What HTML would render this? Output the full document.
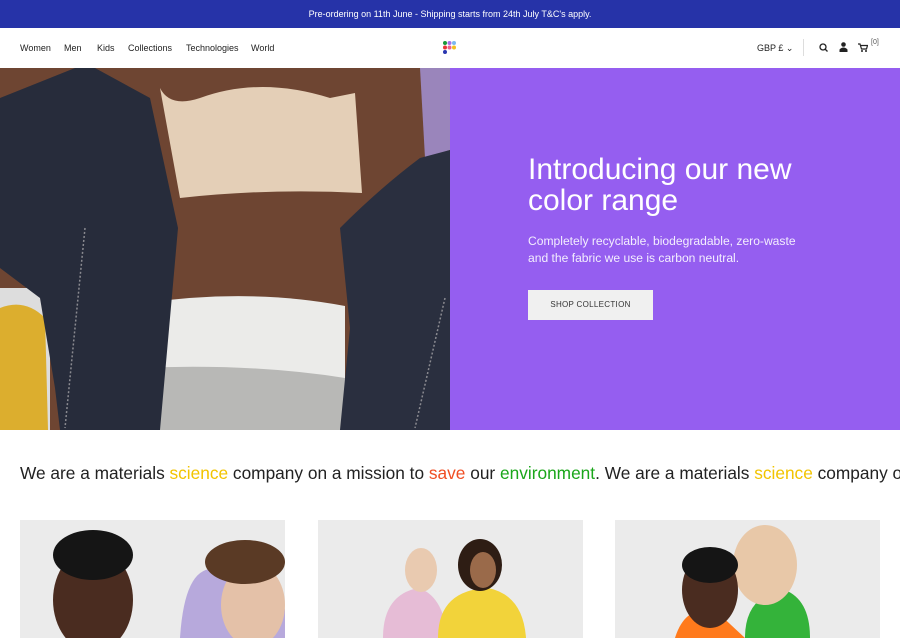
<!DOCTYPE html>
<html><head><meta charset="utf-8"><style>
*{margin:0;padding:0;box-sizing:border-box}
body{width:900px;height:638px;overflow:hidden;background:#fff;font-family:"Liberation Sans",sans-serif;color:#222;position:relative}
.top{height:28px;background:#2633a8;color:#fff;font-size:9px;text-align:center;line-height:28px}
.nav{position:absolute;top:28px;left:0;width:900px;height:40px;font-size:9px}
.nav span{position:absolute;top:15px}
.hero{position:absolute;top:68px;left:0;width:900px;height:362px}
.purple{position:absolute;left:450px;top:0;width:450px;height:362px;background:#955ef0;color:#fff}
h1{position:absolute;left:78px;top:86px;font-weight:400;font-size:30px;line-height:31px;white-space:nowrap}
.sub{position:absolute;left:78px;top:165px;font-size:12.1px;line-height:17px;color:#f3eefe}
.btn{position:absolute;left:78px;top:222px;width:125px;height:30px;background:#f0f0f0;color:#333;font-size:8px;letter-spacing:.3px;text-align:center;line-height:30px}
.mis{position:absolute;left:20px;top:463px;font-size:17.3px;white-space:nowrap;color:#222}
.card{position:absolute;top:520px;width:265px;height:118px;background:#ebebeb;overflow:hidden}
</style></head><body>
<div class="top">Pre-ordering on 11th June - Shipping starts from 24th July T&amp;C's apply.</div>
<div class="nav">
<span style="left:20px">Women</span><span style="left:64px">Men</span><span style="left:97px">Kids</span><span style="left:128px">Collections</span><span style="left:186px">Technologies</span><span style="left:251px">World</span>
<svg style="position:absolute;left:442px;top:13px" width="16" height="16"><circle cx="3" cy="2" r="2" fill="#1a9a3a"/><circle cx="7.5" cy="2" r="2" fill="#a66de8"/><circle cx="12" cy="2" r="2" fill="#7ab8f0"/><circle cx="3" cy="6.5" r="2" fill="#e8363a"/><circle cx="7.5" cy="6.5" r="2" fill="#ef5f8a"/><circle cx="12" cy="6.5" r="2" fill="#f2c01f"/><circle cx="3" cy="11" r="2" fill="#2a36b0"/></svg>
<span style="left:757px">GBP £ &#8964;</span>
<div style="position:absolute;left:803px;top:11px;width:1px;height:17px;background:#ddd"></div>
<svg style="position:absolute;left:819px;top:15px" width="9" height="9"><circle cx="4" cy="4" r="3" fill="none" stroke="#222" stroke-width="1.3"/><path d="M6 6l2.5 2.5" stroke="#222" stroke-width="1.3"/></svg>
<svg style="position:absolute;left:839px;top:14px" width="9" height="10"><circle cx="4.5" cy="2.5" r="2.3" fill="#222"/><path d="M0.5 10v-2.5q4-4 8 0v2.5z" fill="#222"/></svg>
<svg style="position:absolute;left:858px;top:15px" width="10" height="9"><path d="M0 1h2l1.5 5h5l1-3.5h-6.5" fill="none" stroke="#222" stroke-width="1.2"/><circle cx="4" cy="8" r="1" fill="#222"/><circle cx="8" cy="8" r="1" fill="#222"/></svg>
<span style="left:871px;top:11px;font-size:7px;color:#555">[0]</span>
</div>
<div class="hero">
<svg width="450" height="362" style="position:absolute;left:0;top:0">
<rect width="450" height="362" fill="#6e4532"/>
<rect x="0" y="220" width="50" height="142" fill="#ddd"/>
<path d="M0 240 Q25 230 45 250 L48 362 L0 362Z" fill="#dcae2e"/>
<path d="M420 0H450V82L425 90Z" fill="#9a85bb"/>
<path d="M160 20 Q170 40 200 30 Q260 8 330 30 L355 25 L362 125 Q270 120 180 130 Z" fill="#e4cfb7"/>
<path d="M145 235 Q250 220 345 238 L345 362 L140 362Z" fill="#ebebe9"/>
<path d="M138 300 Q250 295 345 310 L345 362 L125 362Z" fill="#b8b8b6"/>
<path d="M0 30 L75 0 L95 0 L150 30 L178 160 L170 250 L160 362 L60 362 L55 320 L40 230 L0 200Z" fill="#272c3b"/>
<path d="M340 160 Q380 120 420 90 L450 82 L450 362 L340 362 L350 260Z" fill="#2a2f3f"/>
<path d="M85 160 L65 360" stroke="#8a8a90" stroke-width="1.5" stroke-dasharray="2 2"/>
<path d="M445 230 L415 360" stroke="#8a8a90" stroke-width="1.5" stroke-dasharray="2 2"/>
</svg>
<div class="purple">
<h1>Introducing our new<br>color range</h1>
<div class="sub">Completely recyclable, biodegradable, zero-waste<br>and the fabric we use is carbon neutral.</div>
<div class="btn">SHOP COLLECTION</div>
</div>
</div>
<div class="mis">We are a materials <span style="color:#f2c400">science</span> company on a mission to <span style="color:#f04d22">save</span> our <span style="color:#1aa61a">environment</span>. We are a materials <span style="color:#f2c400">science</span> company on</div>
<div class="card" style="left:20px"><svg width="265" height="118"><ellipse cx="73" cy="80" rx="40" ry="52" fill="#4a2c20"/><ellipse cx="73" cy="35" rx="40" ry="25" fill="#151515"/><path d="M160 118 Q165 40 200 50 Q250 40 265 90V118Z" fill="#b7a9dc"/><ellipse cx="233" cy="85" rx="32" ry="42" fill="#e4c1a8"/><ellipse cx="225" cy="42" rx="40" ry="22" fill="#5a3a25"/></svg></div>
<div class="card" style="left:318px"><svg width="265" height="118"><path d="M65 118 Q65 75 100 68 Q125 75 130 118Z" fill="#e6bcd6"/><path d="M120 118 Q120 70 170 68 Q205 75 208 118Z" fill="#f2d33a"/><ellipse cx="103" cy="50" rx="16" ry="22" fill="#e9cab0"/><ellipse cx="162" cy="45" rx="22" ry="26" fill="#2e1d14"/><ellipse cx="165" cy="50" rx="13" ry="18" fill="#9a6a4a"/></svg></div>
<div class="card" style="left:615px"><svg width="265" height="118"><path d="M130 118 Q130 75 170 70 Q195 80 195 118Z" fill="#34b33a"/><path d="M60 118 Q70 85 100 90 L130 118Z" fill="#ff7a1c"/><ellipse cx="150" cy="45" rx="32" ry="40" fill="#e8c8a8"/><ellipse cx="95" cy="70" rx="28" ry="38" fill="#4a2c20"/><ellipse cx="95" cy="45" rx="28" ry="18" fill="#151515"/></svg></div>
</body></html>
